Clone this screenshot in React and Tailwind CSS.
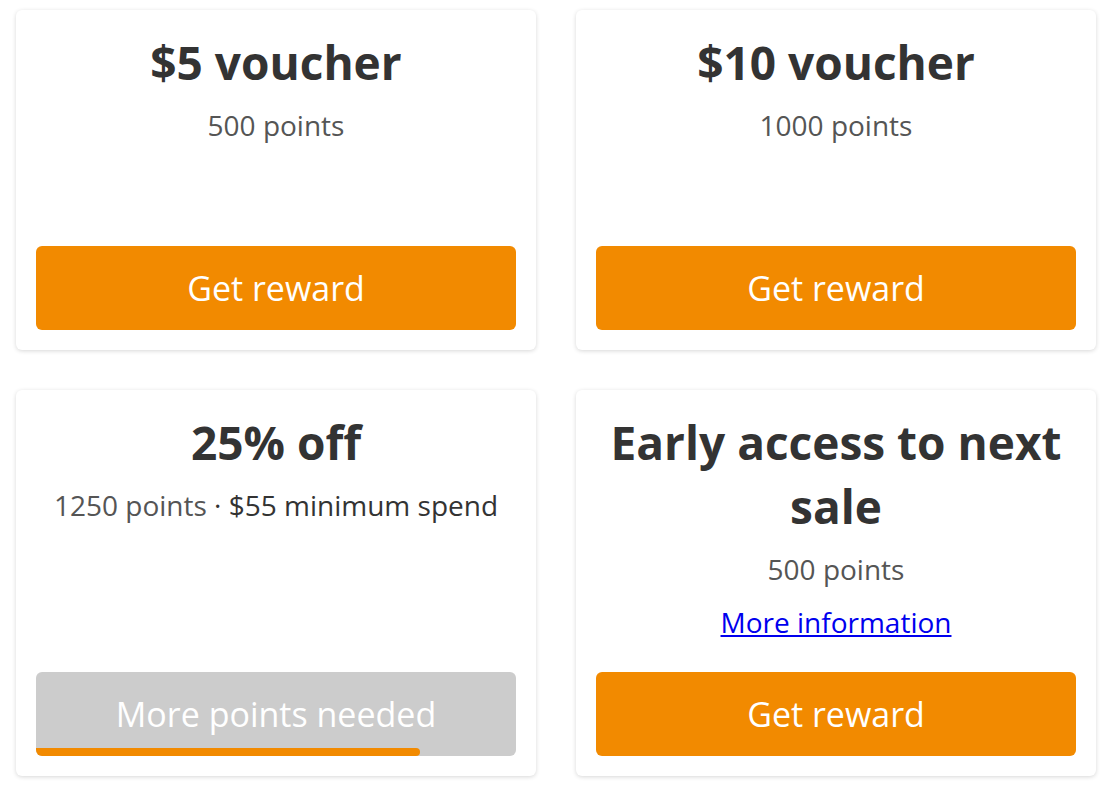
const rewards = [
  { title: "$5 voucher", points: "500 points", action: "get" },
  { title: "$10 voucher", points: "1000 points", action: "get" },
  {
    title: "25% off",
    points: "1250 points",
    extra: "$55 minimum spend",
    action: "locked",
    progress: 0.8,
  },
  {
    title: "Early access to next sale",
    points: "500 points",
    link: "More information",
    action: "get",
  },
];

function RewardButton({ reward }) {
  if (reward.action === "locked") {
    return (
      <div className="relative mt-auto h-[84px] w-full overflow-hidden rounded-[6px] bg-[#cccccc]">
        <div className="flex h-full items-center justify-center text-[34px] text-white">
          More points needed
        </div>
        <div
          className="absolute bottom-0 left-0 h-[8px] rounded-r-full bg-[#f28a00]"
          style={{ width: `${reward.progress * 100}%` }}
        />
      </div>
    );
  }
  return (
    <button className="mt-auto flex h-[84px] w-full items-center justify-center rounded-[6px] bg-[#f28a00] text-[34px] text-white">
      Get reward
    </button>
  );
}

function RewardCard({ reward }) {
  return (
    <div className="flex min-h-[340px] flex-col rounded-[6px] bg-white p-5 text-center shadow-[0_1px_4px_rgba(0,0,0,0.16)]">
      <div className="mb-[29px]">
        <h2 className="text-[46px] font-bold leading-[64px] text-[#333333]">
          {reward.title}
        </h2>
        <p className="mt-[10px] text-[28px] leading-[42px] text-[#555555]">
          {reward.points}
          {reward.extra && (
            <span className="text-[#333333]"> · {reward.extra}</span>
          )}
        </p>
        {reward.link && (
          <p className="mt-[11px] text-[28px] leading-[42px]">
            <a href="#" className="text-[#0000ee] underline">
              {reward.link}
            </a>
          </p>
        )}
      </div>
      <RewardButton reward={reward} />
    </div>
  );
}

export default function App() {
  return (
    <div
      className="min-h-screen bg-white px-4 py-[10px]"
      style={{ fontFamily: '"Open Sans", "Noto Sans", sans-serif' }}
    >
      <div className="grid w-[1080px] grid-cols-2 gap-10">
        {rewards.map((r) => (
          <RewardCard key={r.title} reward={r} />
        ))}
      </div>
    </div>
  );
}
